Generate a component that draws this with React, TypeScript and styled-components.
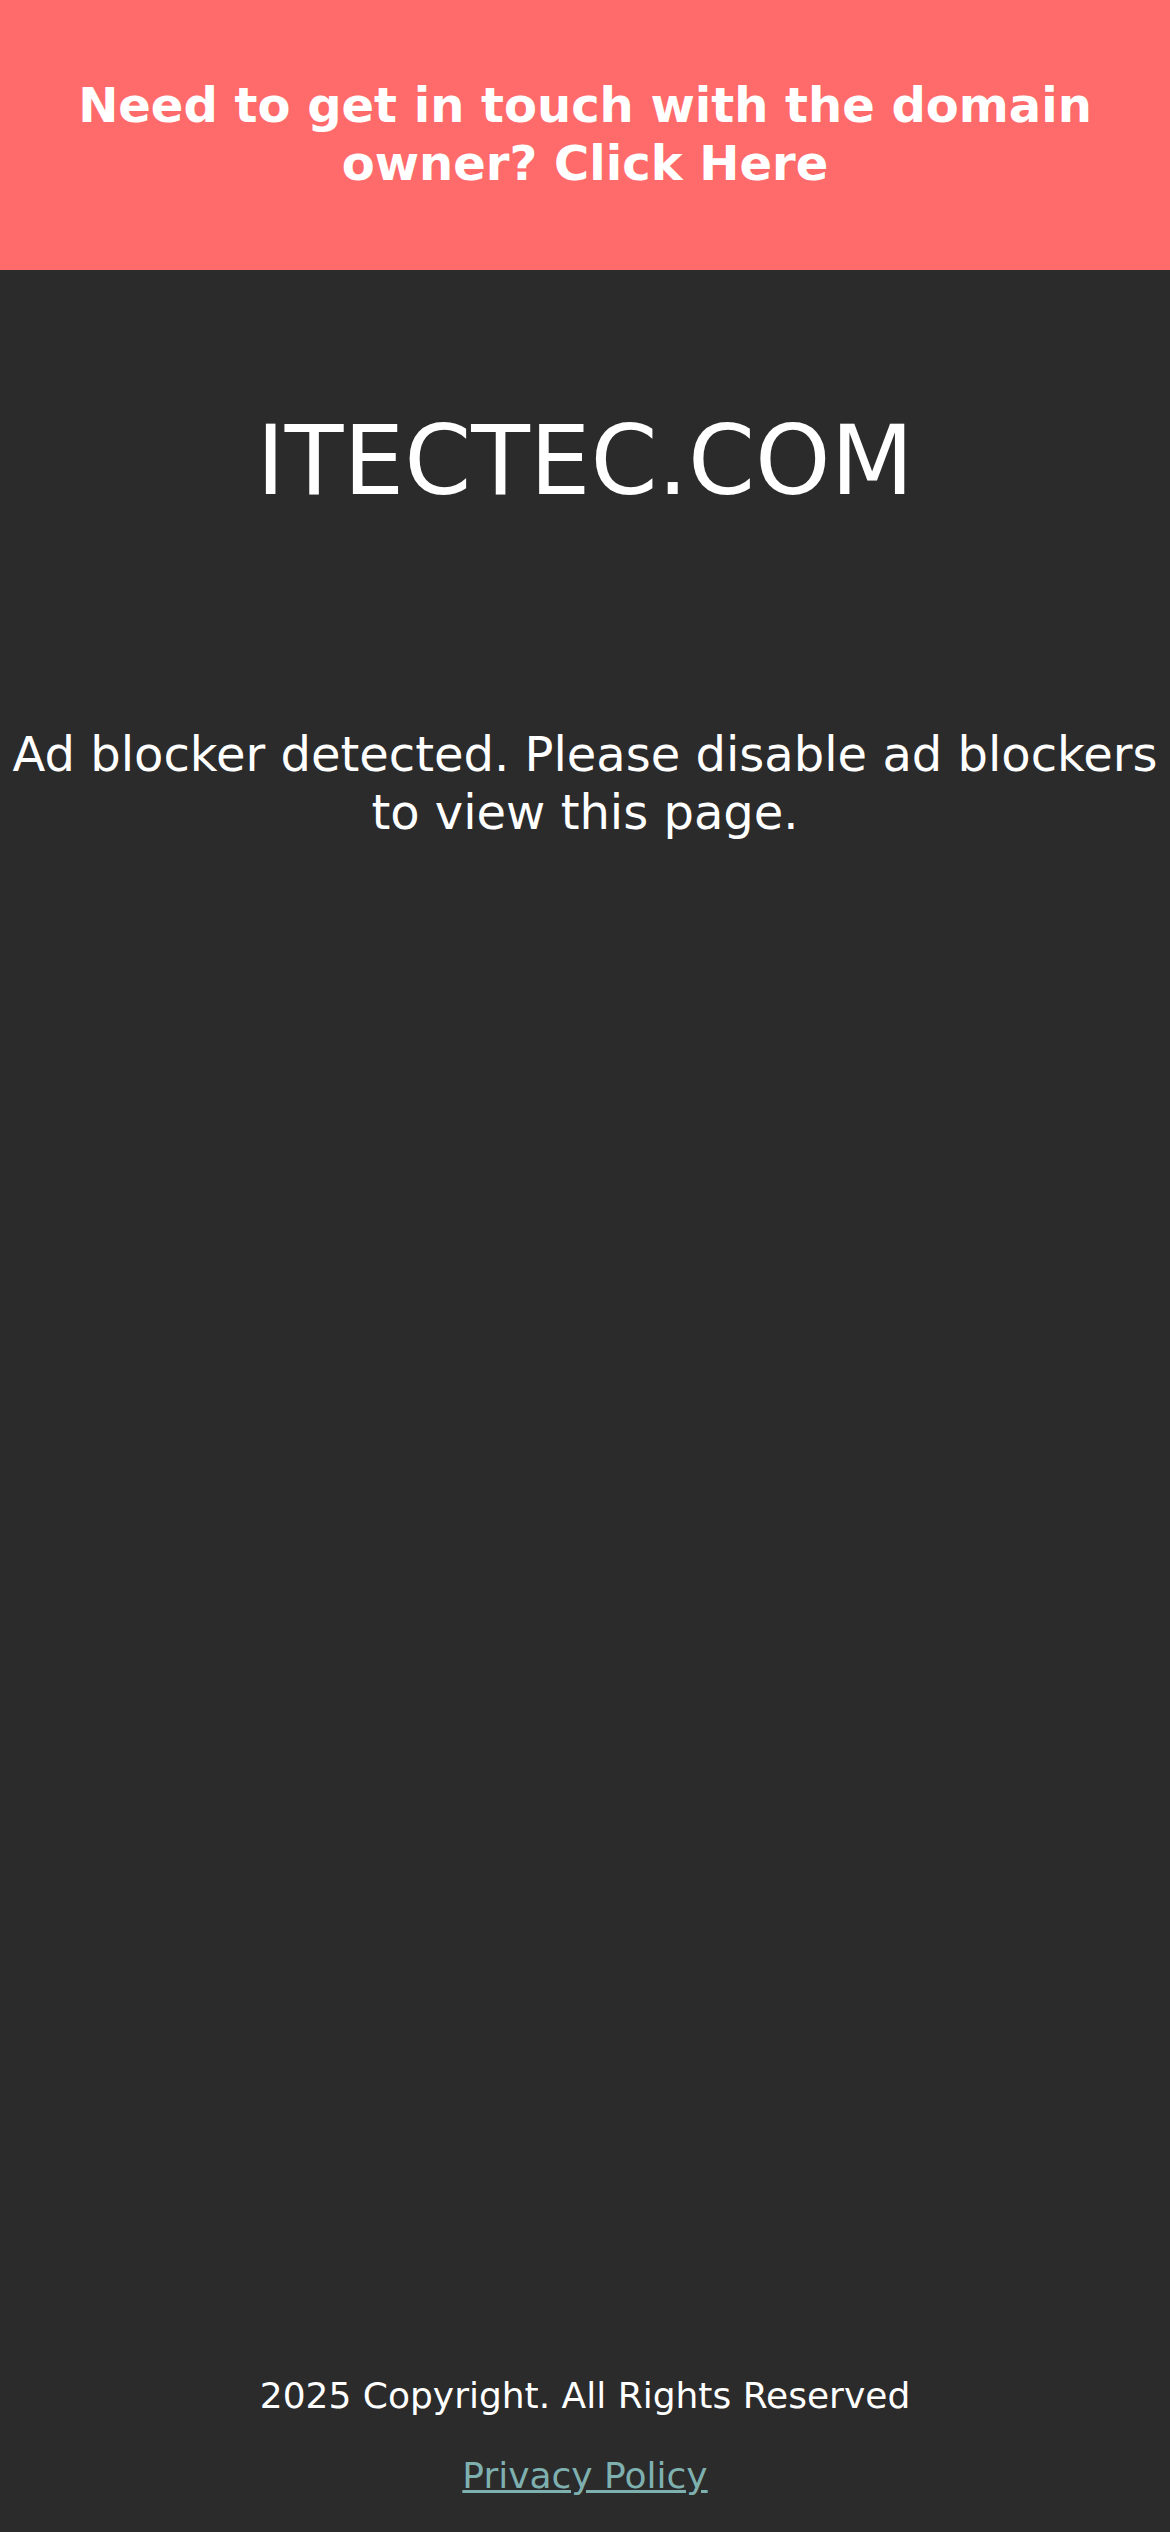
import React from "react";
import styled, { createGlobalStyle } from "styled-components";

const GlobalStyle = createGlobalStyle`
  html, body {
    margin: 0;
    padding: 0;
    background: #2b2b2b;
  }
  body {
    font-family: "DejaVu Sans", "Liberation Sans", sans-serif;
    color: #ffffff;
  }
  * { box-sizing: border-box; }
`;

const Page = styled.div`
  min-height: 100vh;
  display: flex;
  flex-direction: column;
  align-items: stretch;
  background: #2b2b2b;
  text-align: center;
`;

const Banner = styled.a`
  display: flex;
  align-items: center;
  justify-content: center;
  height: 270px;
  padding: 0 40px;
  background: #ff6b6b;
  color: #ffffff;
  font-weight: bold;
  font-size: 48px;
  line-height: 1.2;
  text-decoration: none;
`;

const Title = styled.h1`
  margin: 135px 0 0;
  font-size: 96px;
  font-weight: normal;
  line-height: normal;
  color: #ffffff;
`;

const Message = styled.p`
  margin: 209px 0 0;
  font-size: 48px;
  line-height: 1.2;
  color: #ffffff;
`;

const Footer = styled.footer`
  margin-top: auto;
  display: flex;
  flex-direction: column;
  align-items: center;
  gap: 39px;
  padding-bottom: 36px;
  font-size: 36px;
  line-height: normal;
`;

const Copyright = styled.div`
  color: #ffffff;
`;

const PolicyLink = styled.a`
  color: #7fb0b0;
  text-decoration: underline;
`;

export default function App() {
  return (
    <>
      <GlobalStyle />
      <Page>
        <Banner href="#">Need to get in touch with the domain owner? Click Here</Banner>
        <Title>ITECTEC.COM</Title>
        <Message>Ad blocker detected. Please disable ad blockers to view this page.</Message>
        <Footer>
          <Copyright>2025 Copyright. All Rights Reserved</Copyright>
          <PolicyLink href="#">Privacy Policy</PolicyLink>
        </Footer>
      </Page>
    </>
  );
}
